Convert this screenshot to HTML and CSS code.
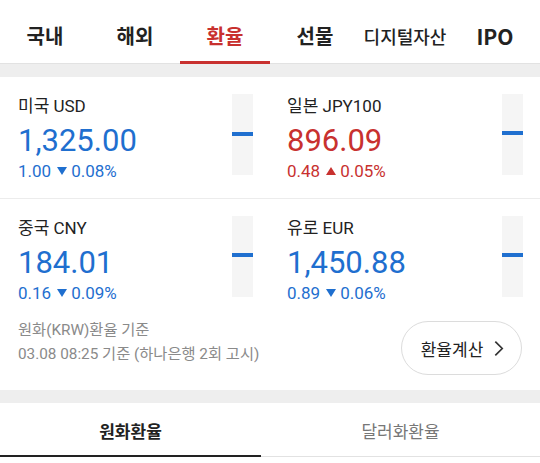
FILE: index.html
```html
<!DOCTYPE html>
<html lang="ko">
<head>
<meta charset="utf-8">
<title>환율</title>
<link rel="stylesheet" href="styles.css">
</head>
<body>
<header class="gnb">
  <a class="gnb-tab">국내</a>
  <a class="gnb-tab">해외</a>
  <a class="gnb-tab is-active">환율</a>
  <a class="gnb-tab">선물</a>
  <a class="gnb-tab is-small">디지털자산</a>
  <a class="gnb-tab is-latin">IPO</a>
</header>
<div class="band"></div>
<section class="rates">
  <div class="rate-row has-line">
    <div class="rate">
      <div class="rate-text">
        <div class="rate-name">미국 USD</div>
        <div class="rate-value down">1,325.00</div>
        <div class="rate-change down">1.00<svg class="tri" viewBox="0 0 10 8"><polygon points="0,0 10,0 5,8"/></svg>0.08%</div>
      </div>
      <div class="gauge"><span class="gauge-mark" style="top:38px"></span></div>
    </div>
    <div class="rate">
      <div class="rate-text">
        <div class="rate-name">일본 JPY100</div>
        <div class="rate-value up">896.09</div>
        <div class="rate-change up">0.48<svg class="tri" viewBox="0 0 10 8"><polygon points="0,8 10,8 5,0"/></svg>0.05%</div>
      </div>
      <div class="gauge"><span class="gauge-mark" style="top:37px"></span></div>
    </div>
  </div>
  <div class="rate-row">
    <div class="rate">
      <div class="rate-text">
        <div class="rate-name">중국 CNY</div>
        <div class="rate-value down">184.01</div>
        <div class="rate-change down">0.16<svg class="tri" viewBox="0 0 10 8"><polygon points="0,0 10,0 5,8"/></svg>0.09%</div>
      </div>
      <div class="gauge"><span class="gauge-mark" style="top:37px"></span></div>
    </div>
    <div class="rate">
      <div class="rate-text">
        <div class="rate-name">유로 EUR</div>
        <div class="rate-value down">1,450.88</div>
        <div class="rate-change down">0.89<svg class="tri" viewBox="0 0 10 8"><polygon points="0,0 10,0 5,8"/></svg>0.06%</div>
      </div>
      <div class="gauge"><span class="gauge-mark" style="top:37px"></span></div>
    </div>
  </div>
</section>
<section class="info">
  <div class="info-text">
    <div>원화(KRW)환율 기준</div>
    <div>03.08 08:25 기준 (하나은행 2회 고시)</div>
  </div>
  <a class="calc-btn">환율계산<svg class="chev" viewBox="0 0 10 16"><polyline points="2,1.5 8.5,8 2,14.5"/></svg></a>
</section>
<div class="band"></div>
<nav class="subtabs">
  <a class="subtab is-active">원화환율</a>
  <a class="subtab">달러화환율</a>
</nav>
</body>
</html>
```
FILE: styles.css
```css
html, body {
  margin: 0;
  padding: 0;
  background: #fff;
}
body {
  width: 540px;
  font-family: Roboto, "Noto Sans CJK KR", sans-serif;
  color: #222;
}
a { text-decoration: none; color: inherit; }

.gnb {
  display: flex;
  height: 64px;
}
.gnb-tab {
  flex: 0 0 90px;
  box-sizing: border-box;
  display: flex;
  align-items: center;
  justify-content: center;
  padding-top: 8px;
  font-family: "Noto Sans CJK KR", Roboto, sans-serif;
  font-size: 20px;
  font-weight: 700;
  color: #222;
  border-bottom: 1px solid #e2e2e2;
}
.gnb-tab.is-active {
  color: #c8312f;
  border-bottom: 3px solid #c8312f;
  padding-top: 10px;
}
.gnb-tab.is-small {
  font-size: 18px;
  font-weight: 500;
}
.gnb-tab.is-latin {
  font-size: 21px;
}

.band {
  height: 13px;
  background: #eeeeee;
}

.rate-row {
  display: grid;
  grid-template-columns: 1fr 1fr;
}
.rate-row.has-line {
  border-bottom: 1px solid #ececec;
}
.rate {
  display: flex;
  height: 121px;
  box-sizing: border-box;
  padding: 18px 17px 0 18px;
}
.rate-row:not(.has-line) .rate {
  height: 104px;
}
.rate + .rate {
  padding-left: 17px;
}
.rate-text {
  flex: 1;
}
.rate-name {
  font-size: 17px;
  line-height: 22px;
  color: #222;
}
.rate-value {
  font-size: 31px;
  line-height: 36px;
  margin-top: 6px;
}
.rate-change {
  display: flex;
  align-items: center;
  font-size: 17px;
  line-height: 20px;
  margin-top: 2px;
}
.down { color: #1f6fcf; }
.up { color: #c8312f; }
.tri {
  width: 10px;
  height: 8px;
  margin: 0 4px 0 6px;
  fill: currentColor;
}

.gauge {
  position: relative;
  flex: 0 0 21px;
  height: 81px;
  margin-top: -1px;
  background: #f5f5f5;
}
.gauge-mark {
  position: absolute;
  left: 0;
  right: 0;
  height: 4px;
  background: #1f6fcf;
}

.info {
  display: flex;
  justify-content: space-between;
  align-items: flex-start;
  padding: 15px 18px 15px 18px;
}
.info-text {
  font-size: 15.3px;
  line-height: 24px;
  color: #8a8a8a;
}
.calc-btn {
  margin-top: 3px;
  width: 121px;
  height: 54px;
  box-sizing: border-box;
  border: 1px solid #dcdcdc;
  border-radius: 27px;
  display: flex;
  align-items: center;
  justify-content: center;
  gap: 10px;
  padding-left: 2px;
  font-family: "Noto Sans CJK KR", Roboto, sans-serif;
  font-size: 17px;
  color: #222;
}
.chev {
  width: 11px;
  height: 17px;
  fill: none;
  stroke: #333;
  stroke-width: 1.6;
}

.subtabs {
  display: grid;
  grid-template-columns: 261px 1fr;
}
.subtab {
  height: 54px;
  box-sizing: border-box;
  display: flex;
  align-items: center;
  justify-content: center;
  font-family: "Noto Sans CJK KR", Roboto, sans-serif;
  font-size: 17px;
  color: #777;
  border-bottom: 1px solid #e2e2e2;
  padding-top: 1px;
}
.subtab.is-active {
  font-weight: 700;
  color: #222;
  border-bottom: 2px solid #222;
  padding-top: 2px;
}
```
